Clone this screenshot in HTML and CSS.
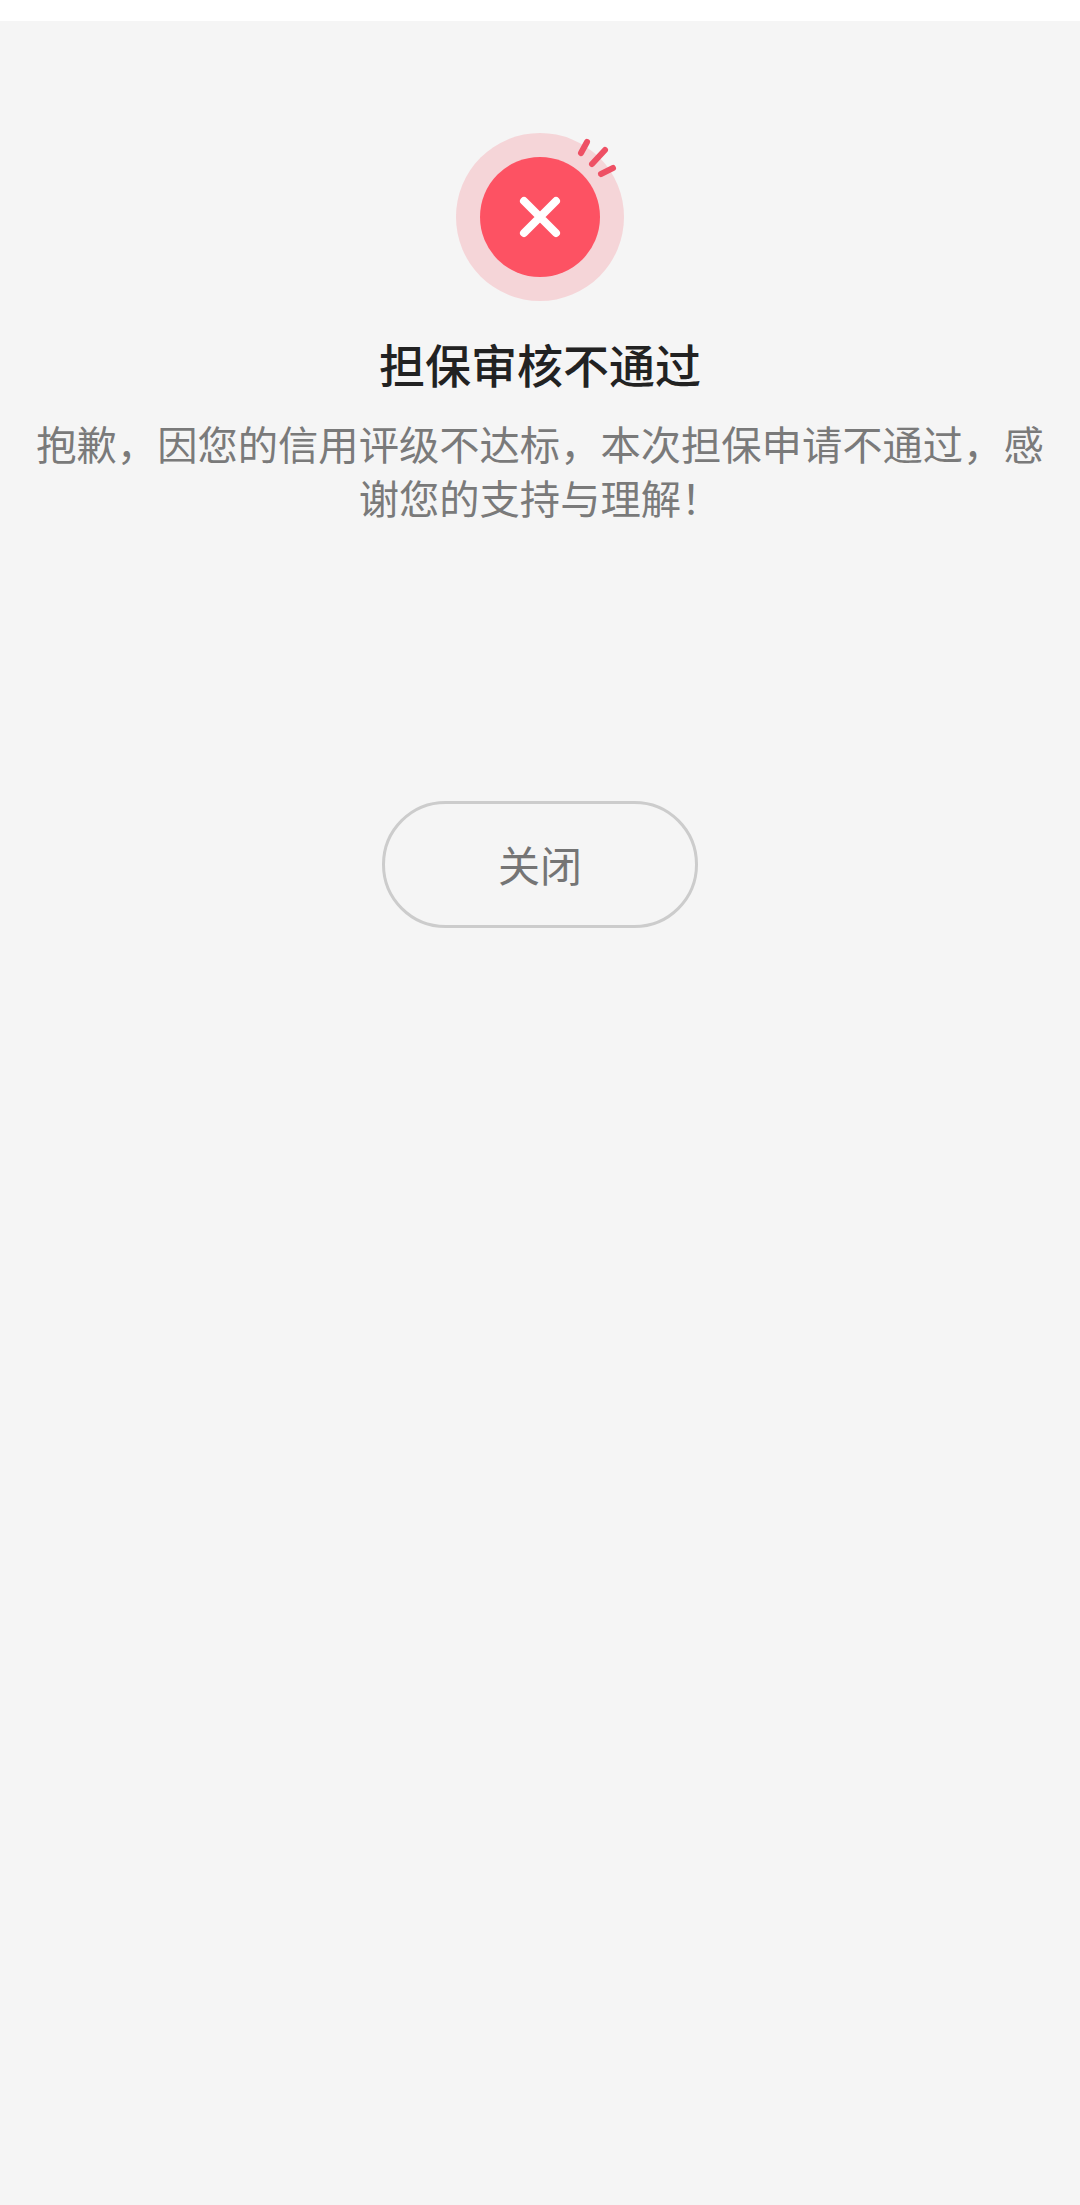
FILE: index.html
```html
<!DOCTYPE html>
<html lang="zh-CN">
<head>
<meta charset="utf-8">
<title>担保审核不通过</title>
<link rel="stylesheet" href="styles.css">
</head>
<body>
<div class="status-bar"></div>
<main class="result">
  <svg class="result-icon" width="180" height="170" viewBox="0 0 180 170" aria-hidden="true">
    <circle cx="84" cy="84" r="84" fill="#f5d5d8"/>
    <circle cx="84" cy="84" r="60" fill="#fd5263"/>
    <path d="M68 68 L100 100 M100 68 L68 100" stroke="#fff" stroke-width="8" stroke-linecap="round"/>
    <g stroke="#ee5064" stroke-width="6" stroke-linecap="round" fill="none">
      <path d="M125 20 L131 9"/>
      <path d="M136 31 L149 17"/>
      <path d="M145 41 L157 35"/>
    </g>
  </svg>
  <h1 class="result-title">担保审核不通过</h1>
  <p class="result-text">抱歉，因您的信用评级不达标，本次担保申请不通过，感谢您的支持与理解！</p>
  <button class="close-button" type="button">关闭</button>
</main>
</body>
</html>
```

FILE: styles.css
```css
* {
  box-sizing: border-box;
}

html,
body {
  margin: 0;
  padding: 0;
}

body {
  width: 1080px;
  height: 2205px;
  background: #f5f5f5;
  font-family: "Noto Sans CJK SC", "Noto Sans", sans-serif;
  overflow: hidden;
}

.status-bar {
  height: 21px;
  background: #ffffff;
}

.result {
  display: flex;
  flex-direction: column;
  align-items: center;
  padding: 112px 30px 0;
}

.result-icon {
  display: block;
  margin-left: 12px;
}

.result-title {
  margin: 33px 0 0;
  font-size: 46px;
  line-height: 54px;
  font-weight: 500;
  color: #222222;
  text-align: center;
}

.result-text {
  margin: 26px 0 0;
  width: 1020px;
  font-size: 40.3px;
  line-height: 54px;
  font-weight: 400;
  color: #7a7a7a;
  text-align: center;
}

.close-button {
  margin-top: 277px;
  width: 316px;
  height: 127px;
  padding: 0 0 3px;
  border: 3px solid #cccccc;
  border-radius: 64px;
  background: transparent;
  font-family: inherit;
  font-size: 42px;
  color: #757575;
}
```
